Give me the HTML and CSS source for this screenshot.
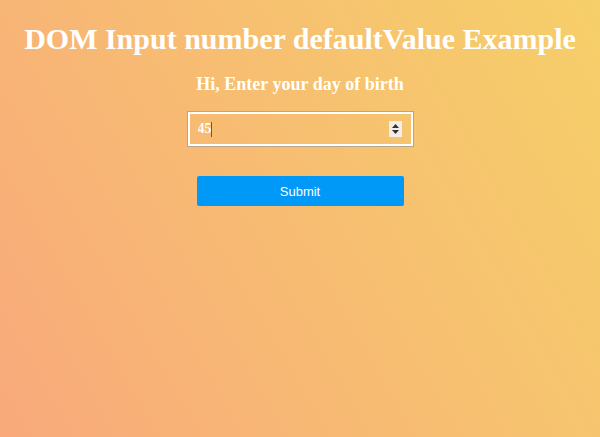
FILE: index.html
```html
<!DOCTYPE html>
<html lang="en">
<head>
  <meta charset="UTF-8" />
  <meta name="viewport" content="width=device-width, initial-scale=1.0"/>
  <title>DOM Input number defaultValue</title>
  <link rel="stylesheet" href="styles.css">
</head>
<body>

  <div class="container">
    <h1>DOM Input number defaultValue Example</h1>
    <h2>Hi, Enter your day of birth</h2>

    <form class="birth-form" onsubmit="return false">
      <div class="field">
        <input type="number" id="day" value="45" />
        <span class="caret"></span>
        <span class="spinner">
          <svg width="9" height="12" viewBox="0 0 9 12">
            <path d="M4.5 1 L8 5 L1 5 Z M4.5 11 L8 7 L1 7 Z" fill="#333"/>
          </svg>
        </span>
      </div>
      <button type="submit">Submit</button>
    </form>
  </div>

</body>
</html>
```

FILE: styles.css
```css
html {
  height: 100%;
}

body {
  margin: 0;
  min-height: 100%;
  font-family: "Liberation Serif", "Times New Roman", serif;
  color: white;
  background: linear-gradient(60deg, #f9a97b 0%, #f7bd72 50%, #f6cf69 100%);
}

.container {
  text-align: center;
  padding-top: 22px;
}

h1 {
  font-size: 30px;
  margin: 0 0 18px;
}

h2 {
  font-size: 18px;
  margin: 0 0 17px;
}

.birth-form {
  display: flex;
  flex-direction: column;
  align-items: center;
}

.field {
  position: relative;
  width: 225px;
  height: 34px;
}

input[type="number"] {
  box-sizing: border-box;
  width: 100%;
  height: 100%;
  padding: 0 8px;
  background: transparent;
  border: 2px solid white;
  outline: 1px solid #b9a58a;
  font-family: "Liberation Serif", serif;
  font-weight: 700;
  font-size: 14px;
  color: white;
  -moz-appearance: textfield;
}

input[type="number"]::-webkit-inner-spin-button,
input[type="number"]::-webkit-outer-spin-button {
  -webkit-appearance: none;
  margin: 0;
}

.caret {
  position: absolute;
  left: 23px;
  top: 10px;
  width: 1px;
  height: 15px;
  background: #6b5a48;
}

.spinner {
  position: absolute;
  right: 11px;
  top: 9px;
  width: 13px;
  height: 16px;
  display: flex;
  align-items: center;
  justify-content: center;
  background: #f1ede8;
}

button {
  margin-top: 30px;
  width: 207px;
  height: 30px;
  border: none;
  border-radius: 2px;
  background-color: #0099f7;
  color: white;
  font-family: Arial, "Liberation Sans", sans-serif;
  font-size: 13px;
  cursor: pointer;
}
```
